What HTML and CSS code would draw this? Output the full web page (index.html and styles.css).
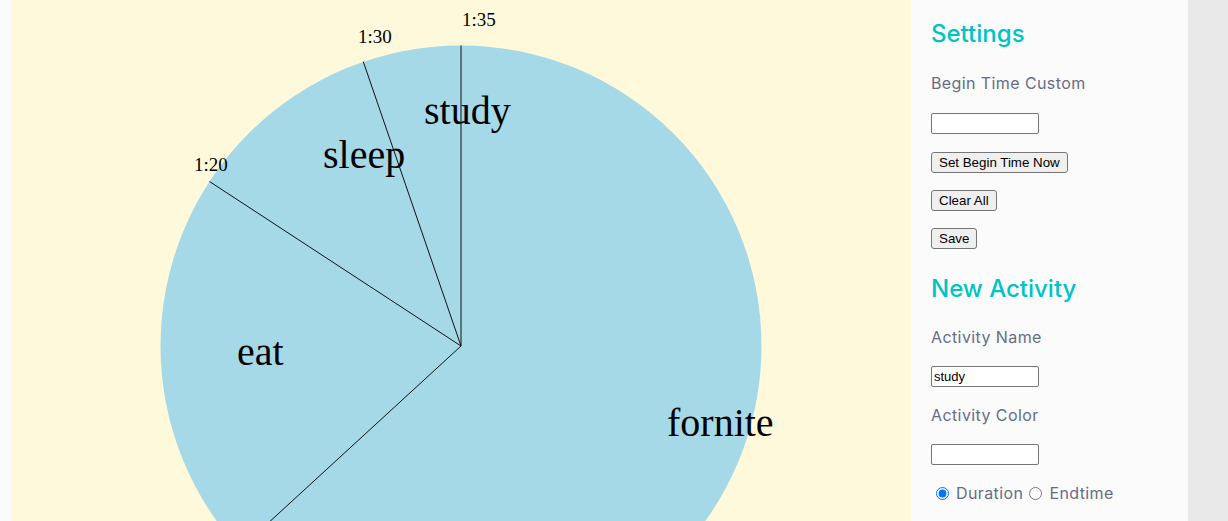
FILE: index.html
```html
<!doctype html>
<html lang="en">
	<head>
		<meta charset="UTF-8" />
		<meta name="viewport" content="width=device-width, initial-scale=1.0" />
		<title>time pie</title>
		<link rel="stylesheet" href="styles.css">
	</head>

	<body>
		<div class="app">
			<div class="chart">
				<svg class="pie" width="900" height="700" viewBox="0 0 900 700">
					<circle cx="450" cy="346" r="300.5" fill="#a5d9e8" />
					<line x1="450" y1="346" x2="450" y2="45.5" />
					<line x1="450" y1="346" x2="352.3" y2="61.7" />
					<line x1="450" y1="346" x2="198.5" y2="181.5" />
					<line x1="450" y1="346" x2="228.9" y2="549" />
					<text class="tick" x="451" y="26">1:35</text>
					<text class="tick" x="347" y="43">1:30</text>
					<text class="tick" x="183" y="171">1:20</text>
					<text class="name" x="413" y="124">study</text>
					<text class="name" x="312" y="168">sleep</text>
					<text class="name" x="226" y="365">eat</text>
					<text class="name" x="656" y="436">fornite</text>
				</svg>
			</div>
			<aside class="panel">
				<h2>Settings</h2>
				<label for="beginTime">Begin Time Custom</label>
				<input id="beginTime" type="text" autocomplete="off" />
				<button>Set Begin Time Now</button>
				<button>Clear All</button>
				<button>Save</button>
				<h2>New Activity</h2>
				<label for="activityName">Activity Name</label>
				<input id="activityName" type="text" value="study" autocomplete="off" />
				<label for="activityColor">Activity Color</label>
				<input id="activityColor" type="text" autocomplete="off" />
				<div class="mode">
					<label><input type="radio" name="mode" checked /> Duration</label>
					<label><input type="radio" name="mode" /> Endtime</label>
				</div>
			</aside>
		</div>
	</body>
</html>
```

FILE: styles.css
```css
*,
*::before,
*::after {
	box-sizing: border-box;
	margin: 0;
	padding: 0;
}

html,
body {
	height: 100%;
	overflow: hidden;
}

body {
	background-color: #e9e9e9;
	font-family: Inter, 'Open Sans', sans-serif;
}

.app {
	display: flex;
	width: 1188px;
	height: 100%;
	padding-left: 11px;
	background-color: #fbfbfb;
}

.chart {
	flex: none;
	width: 900px;
	background-color: #fff9db;
	overflow: hidden;
}

.pie {
	display: block;

	line {
		stroke: #111;
		stroke-width: 1;
	}

	text {
		font-family: 'Liberation Serif', serif;
		fill: #000;
	}

	.tick {
		font-size: 19px;
	}

	.name {
		font-size: 40px;
	}
}

.panel {
	flex: none;
	width: 277px;
	padding: 16px 20px;
	display: flex;
	flex-direction: column;
	align-items: flex-start;
	row-gap: 18px;

	h2 {
		font-size: 24px;
		line-height: 36px;
		font-weight: 500;
		color: #00c3c6;
	}

	h2 + label {
		margin-top: 1px;
	}

	h2:nth-of-type(2) {
		margin-top: 4px;
	}

	h2:nth-of-type(2) + label {
		margin-top: 0;
	}

	label {
		font-size: 16px;
		line-height: 24px;
		letter-spacing: 0.4px;
		color: #676d87;
	}

	label[for='activityColor'] {
		margin-top: -2px;
	}

	#activityName {
		margin-top: -1px;
	}

	#activityColor {
		margin-top: -1px;
	}

	input[type='text'] {
		width: 108px;
		height: 21px;
		padding: 1px 2px;
		border: 1px solid #767676;
		border-radius: 2px;
		font-family: 'Liberation Sans', Arial, sans-serif;
		font-size: 13px;
		background: #fff;
		color: #000;
	}

	button {
		height: 21px;
		padding: 0 7px;
		border: 1px solid #767676;
		border-radius: 3px;
		background: #efefef;
		font-family: 'Liberation Sans', Arial, sans-serif;
		font-size: 13.33px;
		line-height: 19px;
		color: #000;
	}

	button + button {
		margin-top: -1px;
	}
}

.mode {
	display: flex;
	align-items: center;
	column-gap: 6px;
	margin-top: -2px;
	padding-left: 5px;

	label {
		display: flex;
		align-items: center;
		column-gap: 7px;
	}

	input {
		width: 13px;
		height: 13px;
		margin: 0;
	}
}
```
